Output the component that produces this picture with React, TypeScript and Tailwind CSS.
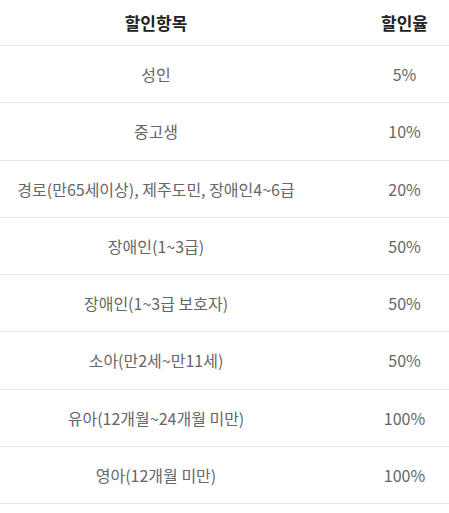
const rows: [string, string][] = [
  ["성인", "5%"],
  ["중고생", "10%"],
  ["경로(만65세이상), 제주도민, 장애인4~6급", "20%"],
  ["장애인(1~3급)", "50%"],
  ["장애인(1~3급 보호자)", "50%"],
  ["소아(만2세~만11세)", "50%"],
  ["유아(12개월~24개월 미만)", "100%"],
  ["영아(12개월 미만)", "100%"],
]

export default function App() {
  return (
    <div
      className="w-[449px] bg-white"
      style={{ fontFamily: '"Noto Sans CJK KR", "Noto Sans", sans-serif' }}
    >
      <div className="grid h-[46px] grid-cols-[312px_1fr] items-center border-b border-[#e6e6e6] text-[17px] font-bold text-[#222]">
        <div className="text-center">할인항목</div>
        <div className="pl-[48px] text-center">할인율</div>
      </div>
      {rows.map(([name, rate]) => (
        <div
          key={name}
          className="grid h-[57.25px] grid-cols-[312px_1fr] items-center border-b border-[#e6e6e6] text-[16px] text-[#666]"
        >
          <div className="text-center">{name}</div>
          <div className="pl-[48px] text-center">{rate}</div>
        </div>
      ))}
    </div>
  )
}
